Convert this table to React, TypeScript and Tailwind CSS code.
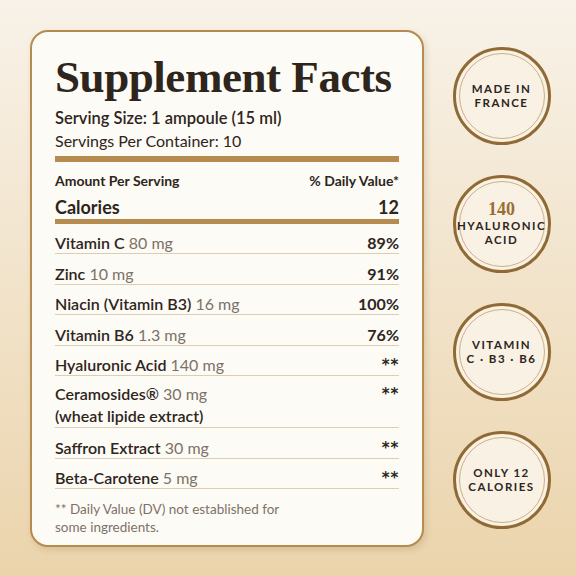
import React from "react";

const sans = { fontFamily: '"Lato", "Inter", "Noto Sans", sans-serif' };
const serif = { fontFamily: '"Liberation Serif", "DejaVu Serif", serif' };

type Row = { name: string; amt: string; dv: string; extra?: string };

const rows: Row[] = [
  { name: "Vitamin C", amt: "80 mg", dv: "89%" },
  { name: "Zinc", amt: "10 mg", dv: "91%" },
  { name: "Niacin (Vitamin B3)", amt: "16 mg", dv: "100%" },
  { name: "Vitamin B6", amt: "1.3 mg", dv: "76%" },
  { name: "Hyaluronic Acid", amt: "140 mg", dv: "**" },
  { name: "Ceramosides®", amt: "30 mg", dv: "**", extra: "(wheat lipide extract)" },
  { name: "Saffron Extract", amt: "30 mg", dv: "**" },
  { name: "Beta-Carotene", amt: "5 mg", dv: "**" },
];

function Badge({ children }: { children: React.ReactNode }) {
  return (
    <div className="relative w-[98px] h-[98px] rounded-full border-[3px] border-[#8f6a35] bg-[#f8f1e4] flex items-center justify-center">
      <div className="absolute inset-[3px] rounded-full border border-[#cdb084]" />
      <div className="relative flex flex-col items-center text-center">{children}</div>
    </div>
  );
}

function Cap({ children }: { children: React.ReactNode }) {
  return (
    <div className="text-[11.5px] leading-[14.5px] font-bold tracking-[0.13em] text-[#2e251c] uppercase" style={sans}>
      {children}
    </div>
  );
}

function DV({ v }: { v: string }) {
  if (v === "**") {
    return (
      <span className="font-bold text-[15px] tracking-[0.05em]" style={{ fontFamily: '"DejaVu Sans", sans-serif' }}>
        **
      </span>
    );
  }
  return <span className="font-bold">{v}</span>;
}

export default function App() {
  return (
    <div className="w-[576px] h-[576px] bg-gradient-to-b from-[#f8f2e8] to-[#ebd4ac] flex" style={sans}>
      <div className="ml-[30px] mt-[30px] w-[394px] h-[517px] border-2 border-[#b58b4f] rounded-[18px] bg-[#fdfbf6] px-[23px] shadow-[2px_3px_6px_rgba(120,90,40,0.18)] text-[#2e251c]">
        <h1 className="mt-[21px] text-[45px] leading-[48px] font-bold tracking-[-0.01em] text-[#2e251c]" style={serif}>
          Supplement Facts
        </h1>
        <div className="mt-[6px] text-[16.5px] leading-[22px] font-semibold">Serving Size: 1 ampoule (15 ml)</div>
        <div className="mt-[1px] text-[16px] leading-[22px] font-normal">Servings Per Container: 10</div>
        <div className="mt-[4px] h-[6px] bg-[#b58b4f]" />
        <div className="mt-[10px] flex justify-between text-[14px] leading-[18px] font-bold">
          <span>Amount Per Serving</span>
          <span>% Daily Value*</span>
        </div>
        <div className="mt-[5px] flex justify-between text-[18px] leading-[24px] font-bold">
          <span>Calories</span>
          <span>12</span>
        </div>
        <div className="h-[4.5px] bg-[#b58b4f]" />
        {rows.map((r) => (
          <div
            key={r.name}
            className={`flex justify-between border-b border-[#dccdb3] text-[16px] ${r.extra ? "pt-[7px] leading-[22px]" : "pt-[9.5px] leading-[20px]"}`}
          >
            <div>
              <div>
                <span className="font-semibold">{r.name}</span>{" "}
                <span className="text-[#7c7267] font-normal">{r.amt}</span>
              </div>
              {r.extra && <div className="font-semibold">{r.extra}</div>}
            </div>
            <DV v={r.dv} />
          </div>
        ))}
        <div className="mt-[11px] text-[13.5px] leading-[18px] text-[#7d7268]">
          ** Daily Value (DV) not established for
          <br />
          some ingredients.
        </div>
      </div>
      <div className="flex-1 flex flex-col items-center justify-center gap-[30px] pl-[3px]">
        <Badge>
          <Cap>Made in</Cap>
          <Cap>France</Cap>
        </Badge>
        <Badge>
          <div className="text-[18px] leading-[17px] font-bold text-[#9a6f34] mb-[1px]" style={serif}>140</div>
          <Cap>Hyaluronic</Cap>
          <Cap>Acid</Cap>
        </Badge>
        <Badge>
          <Cap>Vitamin</Cap>
          <Cap>C · B3 · B6</Cap>
        </Badge>
        <Badge>
          <Cap>Only 12</Cap>
          <Cap>Calories</Cap>
        </Badge>
      </div>
    </div>
  );
}
